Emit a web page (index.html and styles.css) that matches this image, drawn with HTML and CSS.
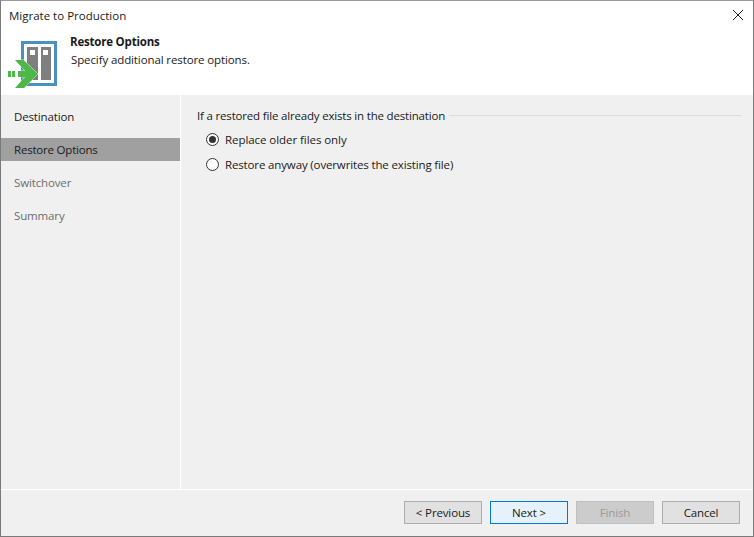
FILE: index.html
```html
<!DOCTYPE html>
<html lang="en">
<head>
<meta charset="utf-8">
<title>Migrate to Production</title>
<link rel="stylesheet" href="styles.css">
</head>
<body>
<div class="window">
  <header class="head">
    <div class="titlebar">
      <span class="title">Migrate to Production</span>
      <svg class="close" width="12" height="12" viewBox="0 0 12 12"><path d="M1 1L11 11M11 1L1 11" stroke="#222" stroke-width="1" fill="none"/></svg>
    </div>
    <div class="banner">
      <svg class="logo" width="52" height="49" viewBox="7 40 52 49">
        <rect x="22.500" y="42.500" width="33" height="42" fill="#fff" stroke="#4a90c0" stroke-width="3" shape-rendering="crispEdges"/>
        <rect x="27" y="47" width="11" height="33" fill="#7f7f7f" shape-rendering="crispEdges"/>
        <rect x="41" y="47" width="10" height="33" fill="#7f7f7f" shape-rendering="crispEdges"/>
        <rect x="30" y="50" width="5" height="5" fill="#fff" shape-rendering="crispEdges"/>
        <rect x="43" y="50" width="5" height="5" fill="#fff" shape-rendering="crispEdges"/>
        <path d="M15 60H23.500L38 74L24 88H15L25 77H18V71H25Z" fill="#4db848" stroke="#fff" stroke-width="0.8" paint-order="stroke"/>
        <rect x="8" y="71" width="3" height="6" fill="#4db848" shape-rendering="crispEdges"/>
        <rect x="12" y="71" width="3" height="6" fill="#4db848" shape-rendering="crispEdges"/>
      </svg>
      <div class="banner-text">
        <div class="banner-title">Restore Options</div>
        <div class="banner-sub">Specify additional restore options.</div>
      </div>
    </div>
  </header>
  <div class="body">
    <nav class="steps">
      <div class="step">Destination</div>
      <div class="step active">Restore Options</div>
      <div class="step muted">Switchover</div>
      <div class="step muted">Summary</div>
    </nav>
    <main class="content">
      <div class="group-title"><span>If a restored file already exists in the destination</span><i class="rule"></i></div>
      <div class="radio-row loose"><span class="radio on"></span><span>Replace older files only</span></div>
      <div class="radio-row"><span class="radio"></span><span>Restore anyway (overwrites the existing file)</span></div>
    </main>
  </div>
  <footer class="foot">
    <button class="btn">&lt; Previous</button>
    <button class="btn primary">Next &gt;</button>
    <button class="btn disabled">Finish</button>
    <button class="btn">Cancel</button>
  </footer>
</div>
</body>
</html>
```
FILE: styles.css
```css
* { box-sizing: border-box; }
html, body { margin: 0; padding: 0; }
body { width: 754px; height: 537px; font-family: "Open Sans", "Noto Sans", sans-serif; font-size: 11.5px; letter-spacing: -0.14px; color: #1a1a1a; }
.window { width: 754px; height: 537px; border: 1px solid #7a7a7a; border-top-color: #9a9a9a; display: flex; flex-direction: column; background: #f0f0f0; }
.head { height: 94px; background: #fff; flex: none; }
.titlebar { height: 30px; display: flex; align-items: center; justify-content: space-between; padding: 0 9px 2px 8px; }
.title { font-size: 11.5px; letter-spacing: 0; }
.banner { display: flex; height: 64px; padding: 0 0 0 6px; }
.logo { flex: none; margin-top: 9px; }
.banner-text { margin-left: 11px; padding-top: 3px; }
.banner-title { font-weight: 700; font-size: 11.5px; line-height: 16px; letter-spacing: -0.2px; }
.banner-sub { line-height: 18px; margin: 1px 0 0 1px; letter-spacing: -0.11px; }
.body { flex: 1; display: flex; min-height: 0; }
.steps { width: 179px; flex: none; padding-top: 5px; }
.step { height: 33px; line-height: 33px; padding-left: 13px; }
.step.active { background: #a0a0a0; height: 23px; line-height: 23px; margin: 5px 0; letter-spacing: -0.2px; }
.step.muted { color: #6d6d6d; }
.content { flex: 1; border-left: 1px solid #fff; padding: 12px 12px 0 16px; }
.group-title { display: flex; align-items: center; height: 16px; letter-spacing: -0.18px; }
.rule { flex: 1; height: 1px; background: #dcdcdc; margin-left: 4px; }
.radio-row { display: flex; align-items: center; height: 25px; padding-left: 9px; gap: 6px; }
.radio-row.loose { letter-spacing: -0.06px; }
.group-title + .radio-row { margin-top: 4px; }
.radio { width: 13px; height: 13px; border: 1px solid #333; border-radius: 50%; background: #fff; flex: none; position: relative; }
.radio.on::after { content: ""; position: absolute; left: 2px; top: 2px; width: 7px; height: 7px; border-radius: 50%; background: #333; }
.foot { height: 47px; flex: none; border-top: 1px solid #fff; display: flex; justify-content: flex-end; gap: 8px; padding: 11px 13px 0 0; }
.btn { width: 78px; height: 23px; border: 1px solid #adadad; background: #e1e1e1; font: inherit; letter-spacing: inherit; color: #1a1a1a; padding: 0; }
.btn.primary { background: #e5f1fb; border-color: #0078d7; }
.btn.disabled { background: #cccccc; border-color: #bfbfbf; color: #9a9a9a; }
```
